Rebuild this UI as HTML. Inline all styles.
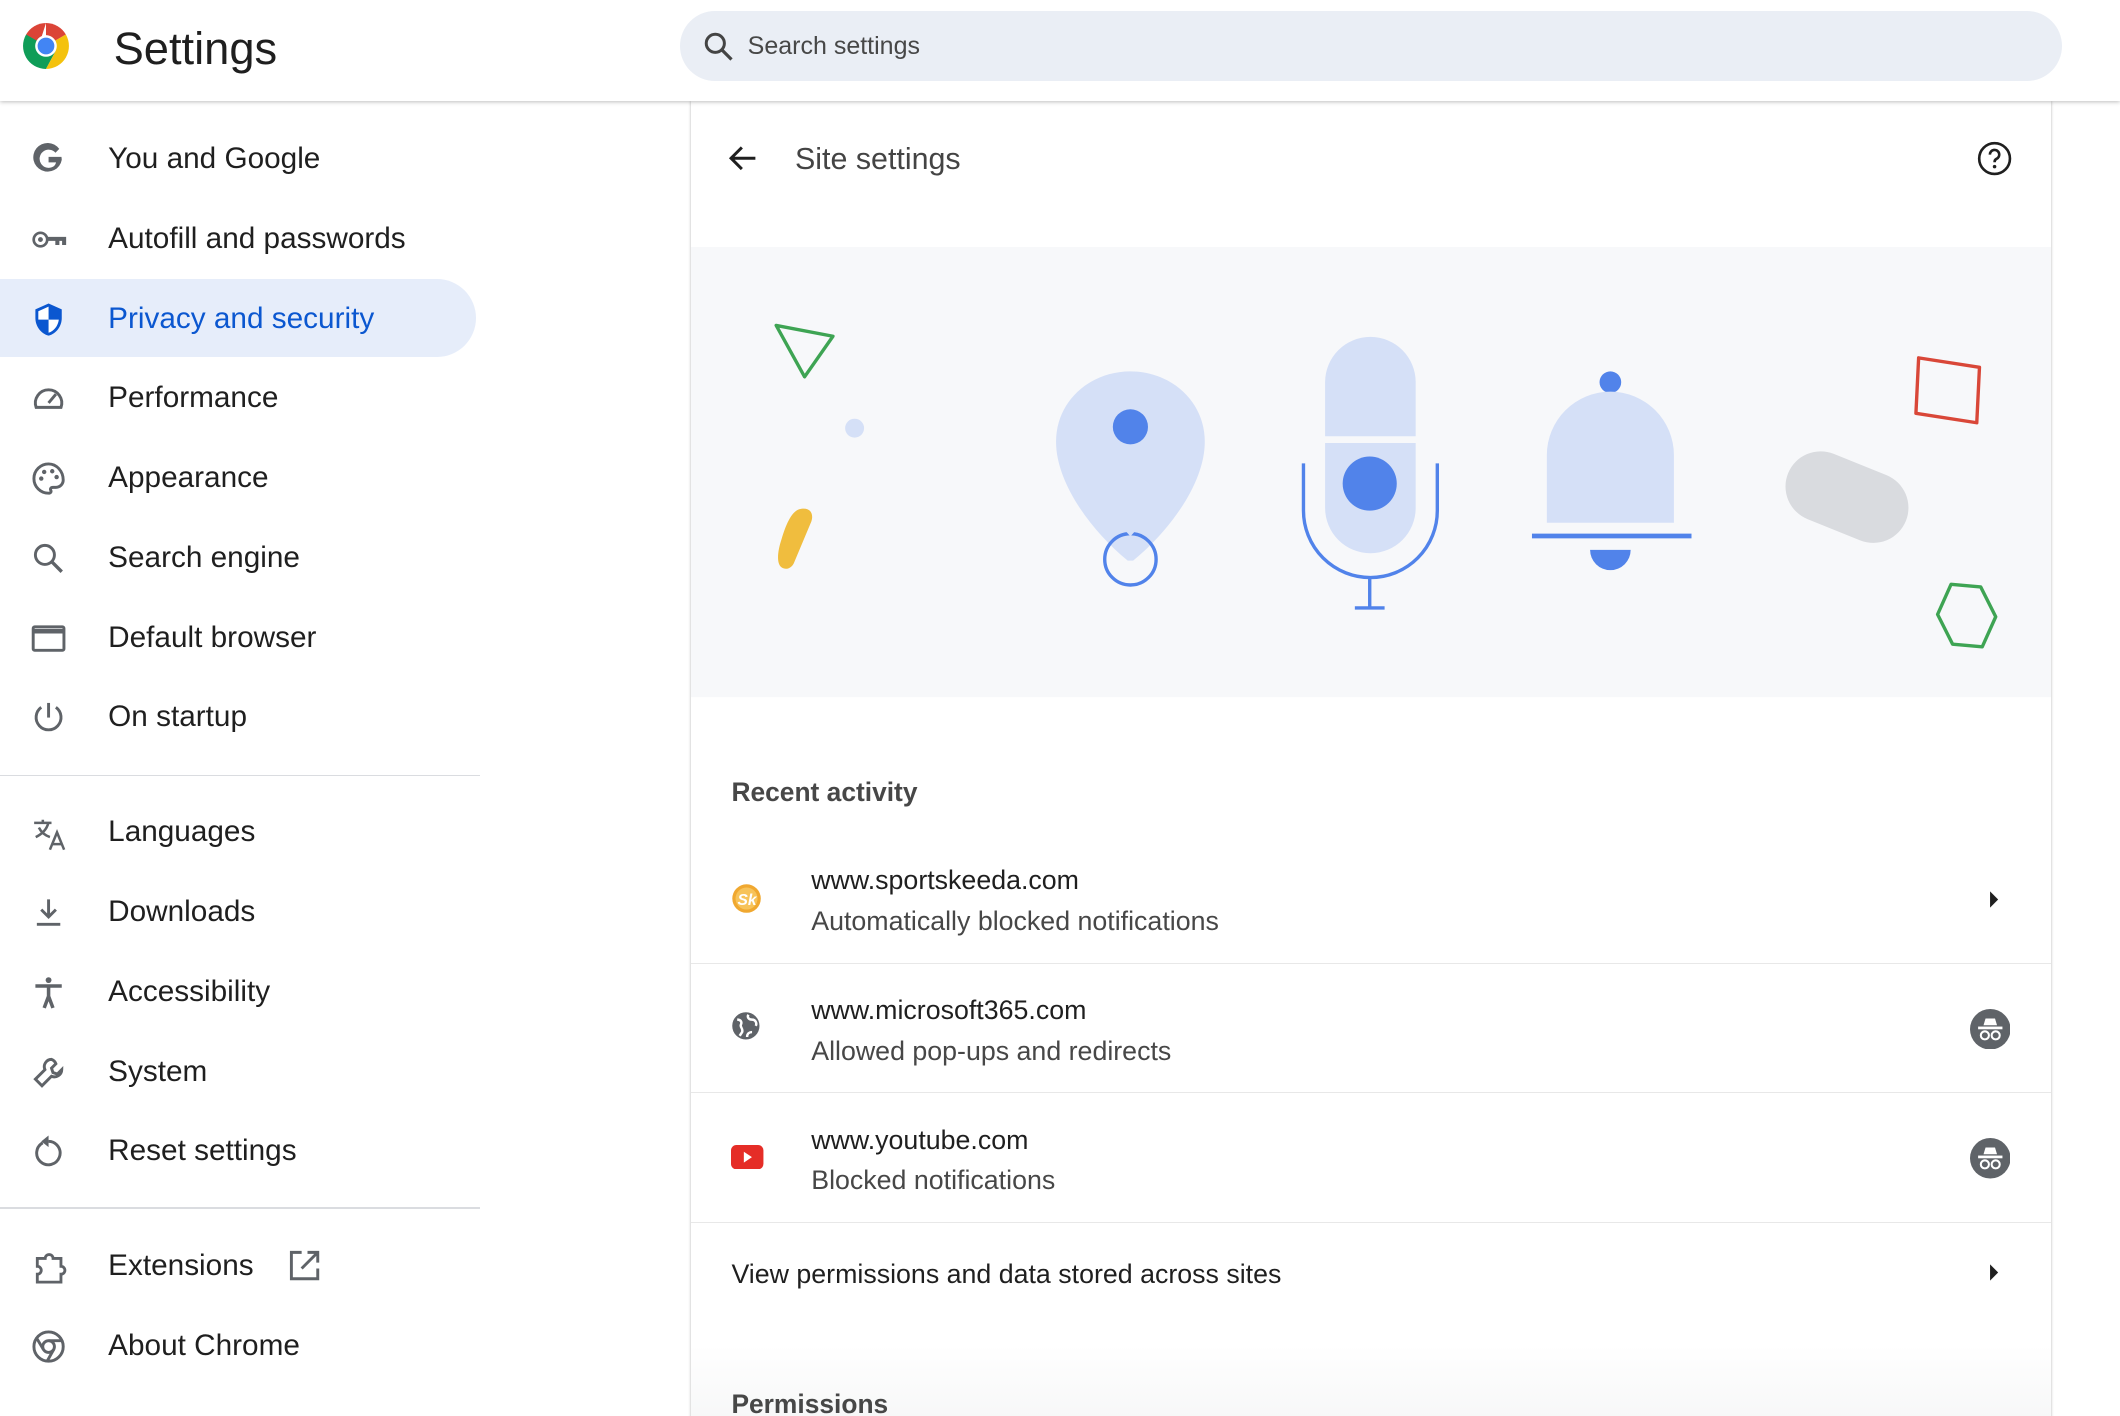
<!DOCTYPE html>
<html><head><meta charset="utf-8"><style>
html,body{margin:0;padding:0;background:#fff;overflow:hidden}
#w{width:1568px;height:1047px;zoom:1.35204;position:relative;font-family:"Liberation Sans",sans-serif;color:#1f1f1f;overflow:hidden}
.hdr{position:absolute;left:0;top:0;width:1568px;height:75px;background:#fff;box-shadow:0 1px 3px rgba(0,0,0,.25);z-index:3}
.title{position:absolute;left:84px;top:17px;font-size:33.5px;color:#1f1f1f}
.search{position:absolute;left:503px;top:8px;width:1022px;height:52px;border-radius:26px;background:#eaeef5}
.search span{position:absolute;left:50px;top:16px;font-size:18.5px;color:#474747}
.nav{position:absolute;left:0;font-size:22px;height:58px;width:352px}
.nav span{position:absolute;left:80px;top:17px}
.nav svg{position:absolute;left:23px;top:17px}
.act{background:#e6edfa;border-radius:0 29px 29px 0;color:#0b57d0}
.div{position:absolute;left:0;width:355px;height:1px;background:#dadce0}
.card{position:absolute;left:511px;top:75px;width:1006px;height:1000px;background:#fff;box-shadow:0 0 2px rgba(0,0,0,.3)}
.row{position:absolute;left:0;width:1006px;border-bottom:1px solid #e8e8e8}
.t1{position:absolute;left:89px;font-size:19.8px;color:#1f1f1f}
.t2{position:absolute;left:89px;font-size:19.8px;color:#474747}
</style></head><body><div id="w">
<div class="hdr">
<svg style="position:absolute;left:17px;top:17px" width="34" height="34" viewBox="0 0 34 34">
<path d="M17 17 L17 0 A17 17 0 0 1 31.7 8.5 Z" fill="#db4437"/>
<path d="M17 0 A17 17 0 0 0 2.3 8.5 L10 22 Z" fill="#db4437"/>
<path d="M2.3 8.5 A17 17 0 0 0 17 34 L24 21 L17 17 Z" fill="#0f9d58"/>
<path d="M31.7 8.5 A17 17 0 0 1 17 34 L24 21 L17 17 Z" fill="#f4c20d"/>
<circle cx="17" cy="17" r="8" fill="#fff"/><circle cx="17" cy="17" r="6.2" fill="#4285f4"/></svg>
<div class="title">Settings</div>
<div class="search"><svg style="position:absolute;left:17px;top:15px" width="23" height="23" viewBox="0 0 24 24"><circle cx="9.5" cy="9.5" r="7" stroke="#444" stroke-width="2.3" fill="none"/><path d="M14.5 14.5 L22 22" stroke="#444" stroke-width="2.5"/></svg><span>Search settings</span></div>
</div>

<div class="nav" style="top:88px"><svg width="26" height="26" viewBox="0 0 24 24"><path d="M21 12.2c0-.7-.1-1.3-.2-2H12v3.7h5.1a4.5 4.5 0 0 1-1.9 2.9 6.2 6.2 0 1 1 1.5-9.5l2.6-2.6A9.8 9.8 0 1 0 21 12.2z" fill="#5f6368"/></svg><span>You and Google</span></div>
<div class="nav" style="top:147px"><svg width="28" height="26" viewBox="0 0 28 24"><circle cx="7" cy="12" r="5" stroke="#5f6368" stroke-width="2" fill="none"/><circle cx="7" cy="12" r="1.8" fill="#5f6368"/><path d="M12 10h14v6h-3v-3h-2v3h-3v-3h-6z" fill="#5f6368"/></svg><span>Autofill and passwords</span></div>
<div class="nav act" style="top:206px"><svg width="26" height="26" viewBox="0 0 24 24"><path d="M12 1 3 5v6c0 5.5 3.8 10.7 9 12 5.2-1.3 9-6.5 9-12V5z" fill="#0b57d0"/><path d="M12 3.2v8.8H5V6.3zM12 12h7c-.5 4.2-3.3 7.9-7 9z" fill="#fff"/></svg><span>Privacy and security</span></div>
<div class="nav" style="top:265px"><svg width="26" height="26" viewBox="0 0 24 24"><path d="M3.5 18a9 9 0 1 1 17 0z" stroke="#5f6368" stroke-width="2" fill="none"/><path d="M12 15l5-6" stroke="#5f6368" stroke-width="2"/></svg><span>Performance</span></div>
<div class="nav" style="top:324px"><svg width="26" height="26" viewBox="0 0 24 24"><path d="M12 2a10 10 0 0 0 0 20c1.5 0 2-1 1.5-2s0-2 1.5-2h2a5 5 0 0 0 5-5c0-6-4.5-11-10-11z" stroke="#5f6368" stroke-width="2" fill="none"/><circle cx="7" cy="12" r="1.5" fill="#5f6368"/><circle cx="9" cy="7.5" r="1.5" fill="#5f6368"/><circle cx="14.5" cy="7" r="1.5" fill="#5f6368"/><circle cx="17.5" cy="11" r="1.5" fill="#5f6368"/></svg><span>Appearance</span></div>
<div class="nav" style="top:383px"><svg width="26" height="26" viewBox="0 0 24 24"><circle cx="9.5" cy="9.5" r="6.5" stroke="#5f6368" stroke-width="2" fill="none"/><path d="M14.5 14.5 21 21" stroke="#5f6368" stroke-width="2.3"/></svg><span>Search engine</span></div>
<div class="nav" style="top:442px"><svg width="26" height="26" viewBox="0 0 24 24"><rect x="1.5" y="4" width="21" height="16" rx="1" stroke="#5f6368" stroke-width="2" fill="none"/><path d="M1.5 7h21" stroke="#5f6368" stroke-width="3"/></svg><span>Default browser</span></div>
<div class="nav" style="top:501px"><svg width="26" height="26" viewBox="0 0 24 24"><path d="M12 2v10" stroke="#5f6368" stroke-width="2"/><path d="M7 5a8.5 8.5 0 1 0 10 0" stroke="#5f6368" stroke-width="2" fill="none"/></svg><span>On startup</span></div>
<div class="div" style="top:573px"></div>
<div class="nav" style="top:586px"><svg width="28" height="28" viewBox="0 0 24 24"><path d="M2 5h11M7.5 3v2M11 5c-1 4-4 7-8 9M5 8c1.5 3 4 5 7 6" stroke="#5f6368" stroke-width="1.6" fill="none"/><path d="M12 22l4.5-11 4.5 11M13.5 18.5h6" stroke="#5f6368" stroke-width="1.6" fill="none"/></svg><span>Languages</span></div>
<div class="nav" style="top:645px"><svg width="26" height="26" viewBox="0 0 24 24"><path d="M12 3v12M7 10l5 5 5-5M4 20h16" stroke="#5f6368" stroke-width="2" fill="none"/></svg><span>Downloads</span></div>
<div class="nav" style="top:704px"><svg width="26" height="26" viewBox="0 0 24 24"><circle cx="12" cy="3.5" r="2" fill="#5f6368"/><path d="M3 7.5h18M12 7.5v7M12 14.5l-3 8M12 14.5l3 8" stroke="#5f6368" stroke-width="2.4" fill="none"/></svg><span>Accessibility</span></div>
<div class="nav" style="top:763px"><svg width="26" height="26" viewBox="0 0 24 24"><path d="M14 3a5 5 0 0 0-4.5 7L3 16.5 7.5 21l6.5-6.5A5 5 0 0 0 21 10l-3 3-3-1-1-3 3-3A5 5 0 0 0 14 3z" stroke="#5f6368" stroke-width="2" fill="none"/></svg><span>System</span></div>
<div class="nav" style="top:822px"><svg width="26" height="26" viewBox="0 0 24 24"><path d="M8 6a8 8 0 1 0 4-1" stroke="#5f6368" stroke-width="2" fill="none"/><path d="M12 1v8l-5-4z" fill="#5f6368"/></svg><span>Reset settings</span></div>
<div class="div" style="top:893px"></div>
<div class="nav" style="top:907px"><svg width="28" height="28" viewBox="0 0 24 24"><path d="M4 6h5a2.5 2.5 0 0 1 5 0h5v5a2.5 2.5 0 0 1 0 5v5H4v-5a2.5 2.5 0 0 0 0-5z" stroke="#5f6368" stroke-width="1.8" fill="none"/></svg><span>Extensions</span><svg style="left:212px;top:16px" width="26" height="26" viewBox="0 0 24 24"><path d="M10 3H3v18h18v-7M14 3h7v7M21 3 10 14" stroke="#5f6368" stroke-width="2" fill="none"/></svg></div>
<div class="nav" style="top:966px"><svg width="26" height="26" viewBox="0 0 24 24"><circle cx="12" cy="12" r="10" stroke="#5f6368" stroke-width="2" fill="none"/><circle cx="12" cy="12" r="4" stroke="#5f6368" stroke-width="2" fill="none"/><path d="M12 8h9M8.5 14 4 6.5M15.5 14l-4.5 8" stroke="#5f6368" stroke-width="2"/></svg><span>About Chrome</span></div>

<div class="card">
<svg style="position:absolute;left:27px;top:30px" width="24" height="24" viewBox="0 0 24 24"><path d="M21 12H4M11 4l-8 8 8 8" stroke="#1f1f1f" stroke-width="2.2" fill="none"/></svg>
<div style="position:absolute;left:77px;top:30px;font-size:22.5px;color:#444">Site settings</div>
<svg style="position:absolute;left:951px;top:29px" width="26" height="26" viewBox="0 0 24 24"><circle cx="12" cy="12" r="10.5" stroke="#1f1f1f" stroke-width="1.8" fill="none"/><path d="M8.8 9.3a3.2 3.2 0 1 1 4.5 2.9c-.9.4-1.3 1-1.3 2.3" stroke="#1f1f1f" stroke-width="1.8" fill="none"/><circle cx="12" cy="17.5" r="1.2" fill="#1f1f1f"/></svg>
<svg style="position:absolute;left:0;top:108px" width="1006" height="333" viewBox="0 0 1006 333">
<rect width="1006" height="333" fill="#f7f8fa"/>
<path d="M63 58 105 66 84 96Z" stroke="#3ea453" stroke-width="2.5" fill="none" stroke-linejoin="round"/>
<circle cx="121" cy="134" r="7" fill="#d5e0f7"/>
<path d="M80 194c8-2 11 3 9 9l-13 31c-2 4-6 5-9 3-4-3-3-12 0-21 3-10 7-20 13-22z" fill="#f0bd3e"/>
<path d="M325 92c30 0 55 22 55 52 0 30-25 65-53 88h-4c-28-23-53-58-53-88 0-30 25-52 55-52z" fill="#d5e0f7"/>
<circle cx="325" cy="133" r="13" fill="#5183ea"/>
<circle cx="325" cy="231" r="19" stroke="#5183ea" stroke-width="2.5" fill="none"/>
<path d="M325 214l-9 -10h18z" fill="#d5e0f7"/>
<path d="M469 140v-40a33.5 33.5 0 0 1 67 0v40z" fill="#d5e0f7"/>
<path d="M469 145h67v48a33.5 33.5 0 0 1-67 0z" fill="#d5e0f7"/>
<circle cx="502" cy="175" r="20" fill="#5183ea"/>
<path d="M453 160v35a49.5 49.5 0 0 0 99 0v-35" stroke="#5183ea" stroke-width="2.5" fill="none"/>
<path d="M502 244v23M491 267h22" stroke="#5183ea" stroke-width="2.5"/>
<circle cx="680" cy="100" r="8" fill="#5183ea"/>
<path d="M633 204v-50a47 47 0 0 1 94 0v50z" fill="#d5e0f7"/>
<rect x="622" y="212" width="118" height="3.5" fill="#5183ea"/>
<path d="M665 224h30a15 15 0 0 1-30 0z" fill="#5183ea"/>
<path d="M908 82l45 7-2 41-45-7z" stroke="#d94738" stroke-width="2.5" fill="none" stroke-linejoin="round"/>
<rect x="808" y="159" width="94" height="52" rx="26" fill="#d9dbdf" transform="rotate(22 855 185)"/>
<path d="M930 251h22l13 21-8 23h-22l-13-21z" stroke="#3ea453" stroke-width="2.5" fill="none" stroke-linejoin="round" transform="rotate(5 948 273)"/>
</svg>
<div style="position:absolute;left:30px;top:500px;font-size:19.5px;color:#474747;font-weight:bold">Recent activity</div>
<div class="row" style="top:543px;height:94px">
<svg style="position:absolute;left:30px;top:35px" width="23" height="23" viewBox="0 0 24 24"><circle cx="12" cy="12" r="11" fill="#f0a830"/><circle cx="12" cy="12" r="8.5" fill="#f7c35a"/><text x="5" y="17" font-size="12" font-style="italic" font-family="Liberation Sans" fill="#fff" font-weight="bold">Sk</text></svg>
<div class="t1" style="top:22px">www.sportskeeda.com</div><div class="t2" style="top:52px">Automatically blocked notifications</div>
<svg style="position:absolute;left:958px;top:40px" width="12" height="14"><path d="M3 1l6 6-6 6z" fill="#1f1f1f"/></svg></div>
<div class="row" style="top:638px;height:95px">
<svg style="position:absolute;left:30px;top:35px" width="22" height="22" viewBox="0 0 24 24"><circle cx="12" cy="12" r="11" fill="#5f6368"/><path d="M5 7c3 0 4 2 3 4s2 3 1 6l-2 3M14 3c-1 2 0 4 3 4s4 3 3 5M13 21c0-3 2-4 4-4" stroke="#fff" stroke-width="2" fill="none"/></svg>
<div class="t1" style="top:23px">www.microsoft365.com</div><div class="t2" style="top:53px">Allowed pop-ups and redirects</div>
<svg style="position:absolute;left:946px;top:33px" width="30" height="30" viewBox="0 0 30 30"><circle cx="15" cy="15" r="15" fill="#5f6368"/><path d="M10 12l1.5-5h7l1.5 5z" fill="#fff"/><rect x="6" y="13" width="18" height="2" fill="#fff"/><circle cx="11" cy="19.5" r="3" stroke="#fff" stroke-width="1.5" fill="none"/><circle cx="19" cy="19.5" r="3" stroke="#fff" stroke-width="1.5" fill="none"/></svg></div>
<div class="row" style="top:734px;height:95px">
<svg style="position:absolute;left:30px;top:38px" width="24" height="18" viewBox="0 0 24 18"><rect width="24" height="18" rx="4" fill="#e52d27"/><path d="M9.5 5l6 4-6 4z" fill="#fff"/></svg>
<div class="t1" style="top:23px">www.youtube.com</div><div class="t2" style="top:53px">Blocked notifications</div>
<svg style="position:absolute;left:946px;top:33px" width="30" height="30" viewBox="0 0 30 30"><circle cx="15" cy="15" r="15" fill="#5f6368"/><path d="M10 12l1.5-5h7l1.5 5z" fill="#fff"/><rect x="6" y="13" width="18" height="2" fill="#fff"/><circle cx="11" cy="19.5" r="3" stroke="#fff" stroke-width="1.5" fill="none"/><circle cx="19" cy="19.5" r="3" stroke="#fff" stroke-width="1.5" fill="none"/></svg></div>
<div style="position:absolute;left:30px;top:856px;font-size:19.8px;color:#1f1f1f">View permissions and data stored across sites</div>
<svg style="position:absolute;left:958px;top:859px" width="12" height="14"><path d="M3 1l6 6-6 6z" fill="#1f1f1f"/></svg>
<div style="position:absolute;left:0;top:920px;width:1006px;height:80px;background:linear-gradient(#fff,#f3f4f5)"></div>
<div style="position:absolute;left:30px;top:952px;font-size:19.5px;color:#474747;font-weight:bold">Permissions</div>
</div>
</div></body></html>
